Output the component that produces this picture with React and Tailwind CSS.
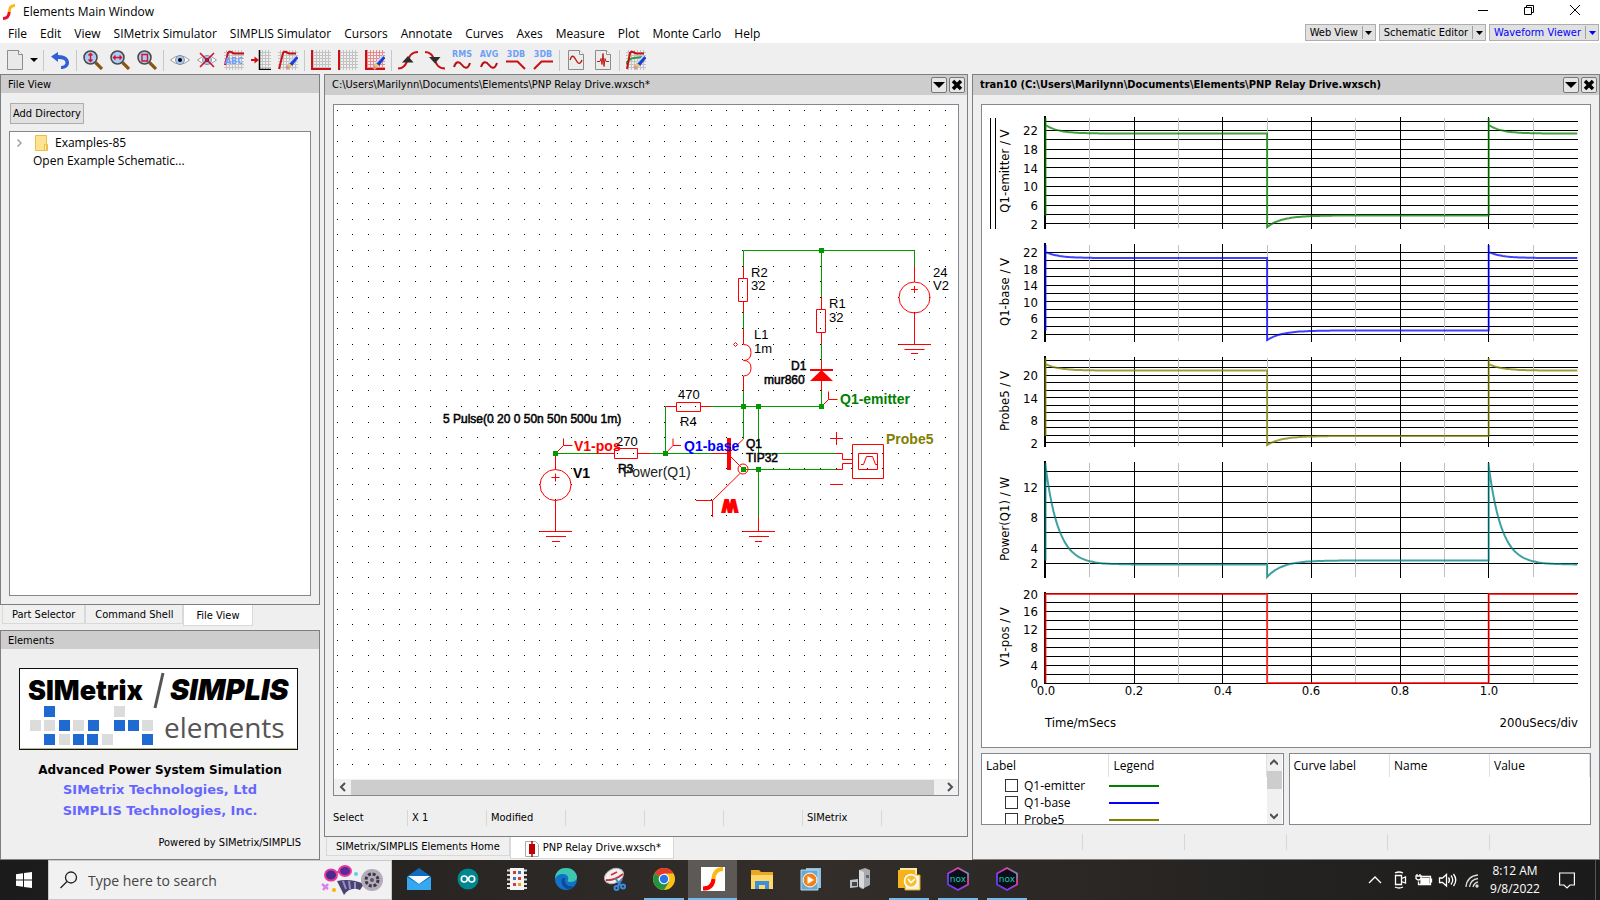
// Elements main window: file browser, schematic editor and waveform viewer
// side by side, sitting above the desktop taskbar.

import { clsx } from "clsx";

const ui = "font-['DejaVu_Sans_Condensed','DejaVu_Sans',sans-serif]";
const segoe = "font-['Open_Sans','Noto_Sans',sans-serif]";

const MENUS = [
  "File",
  "Edit",
  "View",
  "SIMetrix Simulator",
  "SIMPLIS Simulator",
  "Cursors",
  "Annotate",
  "Curves",
  "Axes",
  "Measure",
  "Plot",
  "Monte Carlo",
  "Help",
];

/* ---------------------------------------------------------------- header */

function ViewButton({ label, active }) {
  return (
    <div
      className={clsx(
        "flex h-[17px] items-center border border-[#adadad] bg-[#e1e1e1] text-[11px] leading-[15px]",
        active ? "text-[#0000ff]" : "text-black",
      )}
    >
      <button type="button" className="px-1 whitespace-nowrap">
        {label}
      </button>
      <button
        type="button"
        aria-label={`${label} options`}
        className="flex h-[13px] w-[13px] items-center justify-center border-l border-[#a0a0a0]"
      >
        <svg className="h-1 w-[7px]" viewBox="0 0 7 4" fill="currentColor">
          <path d="M0 0h7L3.500 4z" />
        </svg>
      </button>
    </div>
  );
}

function TitleBar() {
  return (
    <div className={clsx("flex h-6 items-center bg-white pl-[3px]", segoe)}>
      <svg className="h-4 w-3" viewBox="0 0 12 16" fill="none">
        <path d="M12 1.500C8 1.500 6.500 3 6.200 8" stroke="#fdb913" strokeWidth="3" />
        <path d="M6.200 8C6 12.500 4 14.500 0 14.500" stroke="#e8112d" strokeWidth="3" />
      </svg>
      <h1 className="ml-2 text-[12px] leading-4">Elements Main Window</h1>
      <div className="ml-auto flex items-center self-start pr-0.5">
        <button type="button" aria-label="Minimize" className="flex h-5 w-[46px] items-center justify-center">
          <span className="h-px w-2.5 bg-black" />
        </button>
        <button type="button" aria-label="Restore" className="flex h-5 w-[46px] items-center justify-center">
          <svg className="size-2.5" viewBox="0 0 10 10" fill="none" stroke="#000">
            <path d="M.5 2.500h7v7h-7zM2.500 2.500v-2h7v7h-2" />
          </svg>
        </button>
        <button type="button" aria-label="Close" className="flex h-5 w-[46px] items-center justify-center">
          <svg className="size-2.5" viewBox="0 0 10 10" fill="none" stroke="#000">
            <path d="M0 0l10 10M10 0L0 10" />
          </svg>
        </button>
      </div>
    </div>
  );
}

function MenuBar() {
  return (
    <div className="flex h-[19px] items-start bg-white">
      <nav className={clsx("flex gap-[13px] pl-2 text-[12px] leading-[19px]", segoe)}>
        {MENUS.map((m) => (
          <button key={m} type="button" className="whitespace-nowrap">
            {m}
          </button>
        ))}
      </nav>
      <div className={clsx("ml-auto flex gap-[3px] pr-px", ui)}>
        <ViewButton label="Web View" />
        <ViewButton label="Schematic Editor" />
        <ViewButton label="Waveform Viewer" active />
      </div>
    </div>
  );
}

/* --------------------------------------------------------------- toolbar */

function Grid({ x = 0, color = "#c2c2c2" }) {
  const n = [2, 5, 8, 11, 14, 17];
  return (
    <g stroke={color} strokeWidth="1">
      {n.map((p) => (
        <path key={p} d={`M${x} ${p + 0.5}H20`} />
      ))}
      {n.filter((p) => p >= x).map((p) => (
        <path key={p} d={`M${p + 0.5} 0V20`} />
      ))}
    </g>
  );
}

function Eraser() {
  return (
    <g>
      <path d="M10.500 13.500L17.500 5.500l3 2.500-6.500 8z" fill="#1c3fd0" />
      <path d="M11 13l7-7.500" stroke="#c8dcff" strokeWidth="1.600" />
      <path d="M9 15l2-2 3 2.500-2 2z" fill="#e9c95c" />
      <path d="M7 17.500L9 15l3 2.500L10 20z" fill="#d6949c" />
    </g>
  );
}

function Lens({ children }) {
  return (
    <>
      <path d="M12.500 12.500L19 19" stroke="#8a5416" strokeWidth="3.200" />
      <circle cx="7.500" cy="7.500" r="6.500" fill="#a9cdf7" stroke="#4a4a4a" strokeWidth="1.600" />
      <g stroke="#d4142a" strokeWidth="1.400" fill="none">{children}</g>
    </>
  );
}

function Eye() {
  return (
    <>
      <path d="M.5 10Q10 1.500 19.500 10Q10 18.500.5 10z" fill="#fff" stroke="#999" />
      <circle cx="10" cy="10" r="4.500" fill="#a8c6ee" stroke="#6c88ac" strokeWidth=".8" />
      <circle cx="10" cy="10" r="2" fill="#000" />
    </>
  );
}

function Wave({ label }) {
  return (
    <>
      <text x="10" y="7" textAnchor="middle" fontSize="8" fontWeight="700" fill="#6f9ff5" fontFamily="DejaVu Sans">
        {label}
      </text>
      {label === "3DB" ? null : (
        <path d="M2 17c2-6 5-6 8-2s6 4 8-2" fill="none" stroke="#b80f12" strokeWidth="2" />
      )}
    </>
  );
}

function Page({ children }) {
  return (
    <>
      <path d="M2.500.5h11l4 4v15h-15z" fill="#ececec" stroke="#8c8c8c" />
      <path d="M13.500.5v4h4" fill="#fff" stroke="#8c8c8c" />
      {children}
    </>
  );
}

const red = { fill: "none", stroke: "#cc0f14", strokeWidth: 2 };

const TOOLS = [
  null,
  ["Undo", <path key="a" d="M1 6.500L8 2v3c7 0 11 3 11 7.500 0 4-3 6.500-8 6.500v-3c3 0 4.500-1.500 4.500-3.500 0-2.500-3-3.500-7.500-3.500V12z" fill="#3060d8" />],
  null,
  ["Zoom Y", <Lens key="a"><path d="M7.500 3.500v8M5.500 5.500l2-2 2 2M5.500 9.500l2 2 2-2" /></Lens>],
  ["Zoom X", <Lens key="a"><path d="M3.500 7.500h8M5.500 5.500l-2 2 2 2M9.500 5.500l2 2-2 2" /></Lens>],
  ["Zoom box", <Lens key="a"><path d="M5 4.500h5.500V11H5z" /></Lens>],
  null,
  ["Show curves", <Eye key="a" />],
  ["Hide curves", <g key="a"><Eye /><path d="M3 3l14 14M17 3L3 17" stroke="#d4142a" strokeWidth="1.600" /></g>],
  ["Name curve", (
    <g key="a">
      <Grid />
      <path d="M1 15L4 3q1-2 3-1l3 1.500h10" {...red} />
      <text x="10" y="14" textAnchor="middle" fontSize="8" fontWeight="700" fill="#6f9ff5" fontFamily="DejaVu Sans">ABC</text>
    </g>
  )],
  ["Add to axis", (
    <g key="a">
      <Grid x={8} />
      <path d="M8.500 0v19.500H20" fill="none" stroke="#000" strokeWidth="1.500" />
      <path d="M0 10h5" {...red} />
      <path d="M3.500 6.500L8 10l-4.500 3.500z" fill="#cc0f14" />
    </g>
  )],
  ["Delete curve", <g key="a"><Grid /><path d="M1 19L5 3q1-2 3-1l3 1.500h7" {...red} /><Eraser /></g>],
  null,
  ["New axis", <g key="a"><Grid /><path d="M1 0v19h19" {...red} /></g>],
  ["New grid", <g key="a"><Grid /><path d="M1 0v20" {...red} /></g>],
  ["Delete axis", <g key="a"><Grid color="#e88a8a" /><path d="M1 0v19h19" {...red} /><Eraser /></g>],
  null,
  ["Rising edge", <g key="a"><path d="M0 18.500c12 0 7-16.500 20-16.500" {...red} /><path d="M4 12.500L10 6l5.500 6.500z" fill="#2e2e2e" /></g>],
  ["Falling edge", <g key="a"><path d="M0 2c12 0 7 16.500 20 16.500" {...red} /><path d="M4 7h11.500L10 13.500z" fill="#2e2e2e" /></g>],
  ["RMS", <Wave key="a" label="RMS" />],
  ["Average", <Wave key="a" label="AVG" />],
  ["Low pass", <g key="a"><Wave label="3DB" /><path d="M0 11.500h11.500L19 19" {...red} /></g>],
  ["High pass", <g key="a"><Wave label="3DB" /><path d="M20 11.500H8.500L1 19" {...red} /></g>],
  null,
  ["Sine", <Page key="a"><path d="M4 10c2-6 4-4 6 0s4 5 6 0" fill="none" stroke="#c01818" strokeWidth="1.400" /></Page>],
  ["Spectrum", <Page key="a"><path d="M4 11.500h3l1-3 1 6 1-11 1 13 1-8 1 3h3" fill="none" stroke="#c01818" /></Page>],
  null,
  ["Clear graph", (
    <g key="a">
      <Grid />
      <path d="M0 14c4-7 8-6 16-7" fill="none" stroke="#2aa04a" strokeWidth="2" />
      <path d="M1 19L4 3q1-2 3-1l3 1.500h8" {...red} />
      <Eraser />
    </g>
  )],
];

function Toolbar() {
  return (
    <div className="flex h-[31px] items-center bg-[#efefef] pt-[3px] pl-px">
      <button type="button" aria-label="New" className="flex w-[27px] justify-center">
        <svg className="h-5 w-4" viewBox="0 0 16 20">
          <path d="M.5.5h11l4 4v15H.5z" fill="#e9e9e9" stroke="#8c8c8c" />
          <path d="M11.500.5v4h4" fill="#fff" stroke="#8c8c8c" />
        </svg>
      </button>
      <button type="button" aria-label="New options" className="flex w-3 justify-center">
        <svg className="h-1 w-2" viewBox="0 0 8 4"><path d="M0 0h8L4 4z" /></svg>
      </button>
      {TOOLS.map((t, i) =>
        t ? (
          <button key={i} type="button" aria-label={t[0]} className="flex w-[27px] justify-center">
            <svg className="size-5" viewBox="0 0 20 20">{t[1]}</svg>
          </button>
        ) : (
          <span key={i} className="flex h-[21px] w-1.5 justify-center">
            <span className="w-px bg-[#c8c8c8]" />
          </span>
        ),
      )}
    </div>
  );
}

/* ---------------------------------------------------------------- panels */

function PanelTitle({ children, bold, controls }) {
  return (
    <div
      className={clsx(
        "flex shrink-0 items-center bg-[#cdcdcd] px-[7px] text-[11px]",
        controls ? "h-5 pr-0.5" : "h-[18px] pt-0.5",
      )}
    >
      <h2 className={clsx("truncate leading-4", bold && "font-bold")}>{children}</h2>
      {controls && (
        <div className="ml-auto flex gap-0.5">
          <button type="button" aria-label="Panel menu" className="flex size-4 items-center justify-center rounded-xs border border-[#777] bg-[#e6e6e6]">
            <svg className="h-1.5 w-3" viewBox="0 0 12 6"><path d="M0 0h12L6 6z" /></svg>
          </button>
          <button type="button" aria-label="Close panel" className="flex size-4 items-center justify-center rounded-xs border border-[#777] bg-[#e6e6e6]">
            <svg className="size-3" viewBox="0 0 12 12"><path d="M2 2l8 8M10 2l-8 8" stroke="#000" strokeWidth="3.500" /></svg>
          </button>
        </div>
      )}
    </div>
  );
}

function FileView() {
  return (
    <section className="flex min-h-0 flex-1 flex-col border border-[#7f7f7f]">
      <PanelTitle>File View</PanelTitle>
      <div className="flex min-h-0 flex-1 flex-col px-2 pt-2.5 pb-2">
        <button type="button" className="ml-px h-[21px] self-start border border-[#adadad] bg-[#e1e1e1] px-0.5 text-[11px] leading-[19px]">
          Add Directory
        </button>
        <ul className={clsx("mt-[7px] flex-1 border border-[#828790] bg-white pt-0.5 text-[12px] leading-[18px]", segoe)}>
          <li className="flex items-center pl-[7px]">
            <svg className="h-2 w-[5px]" viewBox="0 0 5 8" fill="none" stroke="#a0a0a0" strokeWidth="1.500">
              <path d="M.5.5L4 4 .5 7.500" />
            </svg>
            <svg className="ml-[13px] h-4 w-[13px]" viewBox="0 0 13 16">
              <path d="M.5.5h11v9h1v6H.5z" fill="#ffe393" stroke="#e8c04a" />
              <path d="M9.500 9.500h2v6h-2z" fill="#fff0b8" stroke="#e8c04a" />
            </svg>
            <span className="ml-[7px]">Examples-85</span>
          </li>
          <li className="pl-[23px]">Open Example Schematic...</li>
        </ul>
      </div>
    </section>
  );
}

const LOGO_SQUARES = [
  [45, 706, 1], [115, 706, 0],
  [31, 720, 0], [45, 720, 0], [60, 720, 1], [74, 720, 0], [89, 720, 1], [115, 720, 1], [129, 720, 1], [143, 720, 0],
  [45, 734, 1], [60, 734, 0], [74, 734, 1], [88, 734, 1], [103, 734, 0], [143, 734, 1],
];

function ElementsPanel() {
  return (
    <section className="mt-1 flex h-[230px] shrink-0 flex-col border border-[#7f7f7f]">
      <PanelTitle>Elements</PanelTitle>
      <div className="flex flex-1 flex-col items-center pt-[19px] font-['DejaVu_Sans',sans-serif] text-[12px] font-bold">
        <svg className="mr-0.5 h-[82px] w-[280px]" viewBox="20 668 280 82">
          <rect x="20.500" y="668.500" width="278" height="81" fill="#fff" stroke="#111" />
          <path d="M21.500 748.500h276" stroke="#b9b98c" />
          {LOGO_SQUARES.map(([x, y, on]) => (
            <rect key={`${x}-${y}`} x={x} y={y} width="11" height="11" fill={on ? "#1f6ad0" : "#dcdcdc"} />
          ))}
          <text x="29" y="700" fontFamily="Inter, sans-serif" fontWeight="900" fontSize="27">SIMetrix</text>
          <path d="M164 673l-8 35" stroke="#555" strokeWidth="3" />
          <text x="171" y="700" fontFamily="Inter, sans-serif" fontWeight="900" fontStyle="italic" fontSize="29">SIMPLIS</text>
          <text x="165" y="738" fontFamily="'Open Sans', sans-serif" fontSize="28" fontWeight="400" fill="#555">elements</text>
        </svg>
        <p className="mt-3 leading-4">Advanced Power System Simulation</p>
        <a href="#simetrix" className="mt-1 leading-4 text-[13px] text-[#6666ff]">SIMetrix Technologies, Ltd</a>
        <a href="#simplis" className="mt-[5px] leading-4 text-[13px] text-[#6666ff]">SIMPLIS Technologies, Inc.</a>
        <p className={clsx("mt-4 mr-[18px] self-end text-[11px] leading-4 font-normal", ui)}>
          Powered by SIMetrix/SIMPLIS
        </p>
      </div>
    </section>
  );
}

function Tab({ children, active }) {
  return (
    <button
      type="button"
      role="tab"
      aria-selected={!!active}
      className={clsx(
        "flex items-center border border-t-0 border-[#d9d9d9] pt-0.5 whitespace-nowrap",
        active ? "h-full bg-white px-3" : "h-[19px] bg-[#f0f0f0] px-[9px]",
      )}
    >
      {children}
    </button>
  );
}

/* ------------------------------------------------------------- schematic */

const COLS = Array.from({ length: 40 }, (_, i) => Math.floor(337.2 + i * 15.59));
const ROWS = Array.from({ length: 43 }, (_, i) => Math.floor(110.2 + i * 15.59));
const DOTS = ROWS.map((y) => COLS.map((x) => `M${x} ${y}h1v1h-1z`).join("")).join("");

const WIRES = [
  "M743.5 266.500V250.500H914.500V266.500M821.500 250.500V297.500M743.500 313V329M743.500 391V439",
  "M821.500 344V360M821.500 391V406.500H711M758.500 406.500V453.500H836M743.500 469.500H836M758.500 469.500V517",
  "M665.500 406.500V453.500H712M555.500 453.500H598M650 453.500H665.500",
].join("");

const PARTS = [
  // R2, L1
  "M743.500 266V278.500M738.500 278.500h9v23h-9zM743.500 301.500V313M743.500 329V344.500",
  "M743.500 344.500q7.500 0 7.500 8t-7.500 8q7.500 0 7.500 7.500t-7.500 8V391",
  "M733.500 344.500l2-2 2 2-2 2z",
  // R1, D1
  "M821.500 297V309.500M816.500 309.500h9v23h-9zM821.500 332.500V344M821.500 360V391",
  // R4, R3
  "M665.500 406.500H676.500M676.500 402.500h24v9h-24zM700.500 406.500H711",
  "M598 453.500H614.500M614.500 448.500h23v10h-23zM637.500 453.500H650",
  // V2, V1
  "M914.500 266V282M911 289.500h7M914.500 286v7M914.500 313V344.500M899 344.500h32M904.500 349.500h20M911 353.500h7",
  "M555.500 453.500V469.500M551.500 477.500h8M555.500 473.500v8M555.500 500.500V531.500M540 531.500h32M546 536.500h20M552 541.500h8",
  // ground under Q1
  "M758.500 517V531.500M743 531.500h32M749 536.500h20M755 541.500h7",
  // Q1
  "M712 453.500H727M743.500 439L731 451M731 457L743.500 469.500",
  // probes
  "M555.500 453.500l8-8v-7M563.500 445.500h9M665.500 453.500l7.500-8v-7M673 445.500h8M821.500 406.500l7-7v-8M828.500 399.500h9",
  "M740 473.500L712.500 500.500H696M712.500 500.500V517",
  // differential probe
  "M830 438.500h13M836.500 432v13M830 484.500h13M836 453.500h6.500v6h10M836 469.500h6.500v-6h10",
  "M852.500 444.500h31v34h-31zM858.500 453.500h19v16h-19zM861 464.500h2.500l3-8h6l3 8h2",
].join("");

const NODES = [[821, 250], [743, 406], [758, 406], [821, 406], [665, 453], [743, 469], [758, 469], [555, 453]];

const LABELS = [
  ["R2", 751, 277], ["32", 751, 290], ["R1", 829, 308], ["32", 829, 322],
  ["L1", 754, 339], ["1m", 754, 353], ["24", 933, 277], ["V2", 933, 290],
  ["470", 678, 399], ["R4", 680, 426], ["270", 616, 446],
];

const HEAVY = [
  ["D1", 791, 370], ["mur860", 764, 384], ["Q1", 746, 448], ["TIP32", 746, 462], ["R3", 618, 473],
  ["5 Pulse(0 20 0 50n 50n 500u 1m)", 443, 423],
];

const PROBES = [
  ["V1-pos", 574, 451, "#ff0000"],
  ["V1", 573, 478, "#000000"],
  ["Q1-base", 684, 451, "#0000ff"],
  ["Q1-emitter", 840, 404, "#008000"],
  ["Probe5", 886, 444, "#808000"],
];

function Schematic() {
  return (
    <svg
      className="block h-[674px] w-[624px] shrink-0"
      viewBox="334 105 624 674"
      fontFamily="'Liberation Sans', Arial, sans-serif"
      role="img"
      aria-label="PNP Relay Drive schematic"
    >
      <path d={DOTS} fill="#000" shapeRendering="crispEdges" />
      <path d={WIRES} fill="none" stroke="#009900" />
      <path d={PARTS} fill="none" stroke="#ff0000" />
      <g fill="none" stroke="#ff0000">
        <circle cx="914.500" cy="297.500" r="15.500" />
        <circle cx="555.500" cy="485" r="15.500" />
        <circle cx="743" cy="469" r="5" />
      </g>
      <path d="M727 438h4v32h-4zM810 369h23v2h-23zM810 381L821.500 370 833 381z" fill="#ff0000" />
      {NODES.map(([x, y]) => (
        <rect key={`${x}-${y}`} x={x - 2} y={y - 2} width="5" height="5" fill="#009900" />
      ))}
      <g fontSize="13">
        {LABELS.map(([t, x, y]) => (
          <text key={t + x + y} x={x} y={y}>{t}</text>
        ))}
      </g>
      <g fontSize="12" stroke="#000" strokeWidth=".5">
        {HEAVY.map(([t, x, y]) => (
          <text key={t} x={x} y={y}>{t}</text>
        ))}
      </g>
      <text x="623" y="477" fontSize="14" fill="#222">Power(Q1)</text>
      <g fontSize="14" fontWeight="700">
        {PROBES.map(([t, x, y, c]) => (
          <text key={t} x={x} y={y} fill={c}>{t}</text>
        ))}
      </g>
      <text
        textAnchor="middle"
        transform="translate(730 500) rotate(180)"
        fontSize="16"
        fontWeight="700"
        fill="#ff0000"
        stroke="#ff0000"
        strokeWidth="2"
      >
        W
      </text>
    </svg>
  );
}

function Chevron({ dir }) {
  const d = {
    left: "M6 1L2 5l4 4",
    right: "M2 1l4 4-4 4",
    up: "M0 6.500l4-4 4 4",
    down: "M0 3l4 4 4-4",
  }[dir];
  return (
    <svg className="h-2.5 w-2" viewBox="0 0 8 10" fill="none" stroke="#505050" strokeWidth="2">
      <path d={d} />
    </svg>
  );
}

function SchematicPanel() {
  return (
    <div className="flex min-w-0 flex-[645] flex-col pb-px">
      <section className="flex min-h-0 flex-1 flex-col border border-[#7f7f7f]">
        <PanelTitle controls>C:\Users\Marilynn\Documents\Elements\PNP Relay Drive.wxsch*</PanelTitle>
        <div className="mx-2 mt-[9px] flex min-h-0 flex-1 flex-col border border-[#828790] bg-white">
          <div className="min-h-0 flex-1 overflow-hidden">
            <Schematic />
          </div>
          <div className="flex h-4 shrink-0 items-center bg-[#f0f0f0]">
            <button type="button" aria-label="Scroll left" className="flex w-[17px] justify-center"><Chevron dir="left" /></button>
            <div className="h-[15px] flex-1 bg-[#cdcdcd]" />
            <button type="button" aria-label="Scroll right" className="flex w-6 justify-center pl-2"><Chevron dir="right" /></button>
          </div>
        </div>
        <div className="mx-2 flex h-10 shrink-0 items-center pt-1 text-[11px] leading-4 *:h-4 *:w-[79px] *:border-r *:border-[#d7d7d7] *:pl-1">
          <span className="-ml-1">Select</span>
          <span>X 1</span>
          <span>Modified</span>
          <span />
          <span />
          <span />
          <span>SIMetrix</span>
        </div>
      </section>
      <div role="tablist" className="flex h-[22px] items-start pl-0.5 text-[11px]">
        <Tab>SIMetrix/SIMPLIS Elements Home</Tab>
        <Tab active>
          <svg className="mr-1 ml-0.5 h-4 w-3.5" viewBox="0 0 14 16">
            <path d="M.5.5h10l3 3v12H.5z" fill="#fff" stroke="#aaa" />
            <path d="M7 0v16" stroke="#c00000" strokeWidth="1.500" />
            <path d="M4 3h6v10H4z" fill="#c00000" />
          </svg>
          PNP Relay Drive.wxsch*
        </Tab>
      </div>
    </div>
  );
}

/* -------------------------------------------------------------- waveform */

// x position of a time given in milliseconds
const tx = (t) => 1045.5 + t * 443.2;

// exponential settle from y0 to y1, starting at time t0 and running to t1
function settle(t0, t1, y0, y1, tau) {
  const a = tx(t0);
  const b = tx(t1);
  let d = "";
  for (let x = a; x <= b; x += 2) {
    d += `L${x.toFixed(1)} ${(y1 + (y0 - y1) * Math.exp(-(x - a) / tau)).toFixed(1)}`;
  }
  return `${d}L${b.toFixed(1)} ${y1}`;
}

const AXES = [
  {
    name: "Q1-emitter / V", color: "#008000", top: 116, bottom: 228, mid: 171,
    y: (v) => 233 - 4.66 * v, lines: [2, 4, 6, 8, 10, 12, 14, 16, 18, 20, 22, 24], labels: [2, 6, 10, 14, 18, 22],
    peak: 118, start: 125, high: 133.500, dip: 227, low: 215.500,
  },
  {
    name: "Q1-base / V", color: "#0000ff", top: 243, bottom: 341, mid: 292,
    y: (v) => 342.5 - 4.1 * v, lines: [2, 4, 6, 8, 10, 12, 14, 16, 18, 20, 22], labels: [2, 6, 10, 14, 18, 22],
    peak: 245, start: 252, high: 258, dip: 340, low: 330.500,
  },
  {
    name: "Probe5 / V", color: "#808000", top: 356, bottom: 446, mid: 401,
    y: (v) => 450.2 - 3.745 * v, lines: [2, 4, 6, 8, 10, 12, 14, 16, 18, 20, 22, 24], labels: [2, 8, 14, 20],
    peak: 358, start: 364, high: 370.500, dip: 445, low: 436,
  },
  {
    name: "Power(Q1) / W", color: "#008080", top: 461, bottom: 577, mid: 519,
    y: (v) => 578.7 - 7.67 * v, lines: [2, 4, 6, 8, 10, 12, 14], labels: [2, 4, 8, 12],
    peak: 463, start: 466, high: 564.500, dip: 577, low: 560.500,
  },
  {
    name: "V1-pos / V", color: "#ff0000", top: 592, bottom: 683, mid: 637,
    y: (v) => 683 - 4.47 * v, lines: [0, 2, 4, 6, 8, 10, 12, 14, 16, 18, 20], labels: [0, 4, 8, 12, 16, 20],
    peak: 594, start: 594, high: 594, dip: 683, low: 683,
  },
];

function curve(a) {
  return (
    `M${tx(0)} ${a.low}V${a.peak}V${a.start}${settle(0, 0.5, a.start, a.high, 13)}` +
    `V${a.dip}${settle(0.5, 1, a.dip, a.low, 15)}V${a.peak}V${a.start}${settle(1, 1.2, a.start, a.high, 13)}`
  );
}

function Axis({ axis }) {
  return (
    <g>
      <g shapeRendering="crispEdges">
        {axis.lines.map((v) => (
          <path key={v} d={`M1045 ${Math.floor(axis.y(v)) + 0.5}H1578`} stroke="#000" />
        ))}
        {[0.1, 0.3, 0.5, 0.7, 0.9, 1.1].map((t) => (
          <path key={t} d={`M${Math.floor(tx(t)) + 0.5} ${axis.top + 2}V${axis.bottom}`} stroke="#c0c0c0" />
        ))}
        {[0.2, 0.4, 0.6, 0.8, 1].map((t) => (
          <path key={t} d={`M${Math.floor(tx(t)) + 0.5} ${axis.top + 1}V${axis.bottom + 1}`} stroke="#000" />
        ))}
        <path d={`M1045 ${axis.top}V${axis.bottom + 1}`} stroke="#000" strokeWidth="2" />
      </g>
      <path d={curve(axis)} fill="none" stroke={axis.color} strokeWidth="2" strokeOpacity=".75" />
      {axis.labels.map((v) => (
        <text key={v} x="1038" y={Math.round(axis.y(v)) + 5} textAnchor="end">{v}</text>
      ))}
      <text textAnchor="middle" transform={`translate(1009 ${axis.mid}) rotate(-90)`}>{axis.name}</text>
    </g>
  );
}

function Plot() {
  return (
    <svg
      className="block h-[642px] w-[608px] shrink-0"
      viewBox="982 105 608 642"
      fontFamily="'DejaVu Sans Condensed', 'DejaVu Sans', sans-serif"
      fontSize="13"
      role="img"
      aria-label="Transient analysis waveforms"
    >
      <path d="M990.500 118V229M995.500 118V229" stroke="#000" />
      {AXES.map((a) => (
        <Axis key={a.name} axis={a} />
      ))}
      {["0.0", "0.2", "0.4", "0.6", "0.8", "1.0"].map((t) => (
        <text key={t} x={Math.round(tx(Number(t)))} y="695" textAnchor="middle">{t}</text>
      ))}
      <text x="1045" y="727">Time/mSecs</text>
      <text x="1578" y="727" textAnchor="end">200uSecs/div</text>
    </svg>
  );
}

const LEGEND = [
  { id: "q1-emitter", name: "Q1-emitter", line: "bg-[#008000]" },
  { id: "q1-base", name: "Q1-base", line: "bg-[#0000ff]" },
  { id: "probe5", name: "Probe5", line: "bg-[#808000]" },
];

function WaveformPanel() {
  return (
    <section className="flex min-w-0 flex-[627] flex-col border border-[#7f7f7f]">
      <PanelTitle bold controls>tran10 (C:\Users\Marilynn\Documents\Elements\PNP Relay Drive.wxsch)</PanelTitle>
      <div className="mx-2 mt-[9px] min-h-0 flex-1 overflow-hidden border border-[#828790] bg-white">
        <Plot />
      </div>
      <div className={clsx("mx-2 mt-[5px] flex h-[72px] shrink-0 gap-[5px] text-[12px]", segoe)}>
        <div className="flex flex-1 overflow-hidden border border-[#828790] bg-white">
          <div className="flex-1 overflow-hidden">
            <table className="w-full table-fixed text-left leading-[17px]">
              <thead>
                <tr className="h-[23px]">
                  <th className="w-[127px] border-r border-[#e0e0e0] pl-1 font-normal">Label</th>
                  <th className="border-r border-[#e0e0e0] pl-1 font-normal">Legend</th>
                </tr>
              </thead>
              <tbody>
                {LEGEND.map((row) => (
                  <tr key={row.id} className="h-[17px]">
                    <td className="pl-[23px]">
                      <label className="flex items-center gap-1.5">
                        <input type="checkbox" id={row.id} className="size-[13px] appearance-none border border-[#333] bg-white" />
                        {row.name}
                      </label>
                    </td>
                    <td><span className={clsx("block h-0.5 w-[50px]", row.line)} /></td>
                  </tr>
                ))}
              </tbody>
            </table>
          </div>
          <div className="mr-px flex w-[15px] flex-col items-center bg-[#f0f0f0]">
            <button type="button" aria-label="Scroll up" className="flex h-[17px] items-center"><Chevron dir="up" /></button>
            <div className="h-[18px] w-full bg-[#cdcdcd]" />
            <button type="button" aria-label="Scroll down" className="mt-auto flex h-[17px] items-center"><Chevron dir="down" /></button>
          </div>
        </div>
        <div className="flex-1 border border-[#828790] bg-white">
          <table className="w-full table-fixed text-left">
            <thead>
              <tr className="h-[23px]">
                <th className="border-r border-[#e0e0e0] pl-1 font-normal">Curve label</th>
                <th className="border-r border-[#e0e0e0] pl-1 font-normal">Name</th>
                <th className="border-r border-[#e0e0e0] pl-1 font-normal">Value</th>
              </tr>
            </thead>
          </table>
        </div>
      </div>
      <div className="mx-2 flex h-[34px] shrink-0 items-center *:h-4 *:flex-1 *:border-r *:border-[#d7d7d7]">
        <span /><span /><span /><span /><span />
        <span className="border-r-0!" />
      </div>
    </section>
  );
}

/* --------------------------------------------------------------- taskbar */

function Nox() {
  return (
    <>
      <defs>
        <linearGradient id="nox" x1="0" x2="1" y1="1" y2="0">
          <stop offset="0" stopColor="#5a3cf0" />
          <stop offset=".35" stopColor="#8a3cf0" />
          <stop offset=".7" stopColor="#e83ca0" />
          <stop offset="1" stopColor="#20c8d0" />
        </linearGradient>
      </defs>
      <path d="M12 1l10 5.500v11L12 23 2 17.500v-11z" fill="#0c1016" stroke="url(#nox)" strokeWidth="1.800" />
      <text x="12" y="15" textAnchor="middle" fontSize="9" fill="#18c8b8" fontFamily="DejaVu Sans">nox</text>
    </>
  );
}

const APPS = [
  { name: "Mail", icon: <><path d="M0 9.500L12 1l12 8.500V23H0z" fill="#0f6cbd" /><path d="M1 9h22l-11 8z" fill="#f4faff" /><path d="M0 10l12 7.500L24 10v13H0z" fill="#35a8f0" /></> },
  { name: "Arduino", icon: <><circle cx="12" cy="12" r="10.500" fill="#00878f" /><g fill="none" stroke="#fff" strokeWidth="1.600"><circle cx="8.300" cy="12" r="3" /><circle cx="15.700" cy="12" r="3" /></g></> },
  { name: "Chip tool", icon: <><path d="M2 3.500h20M2 8h20M2 12.500h20M2 17h20M2 21h20" stroke="#ddd" strokeWidth="2" /><path d="M5 1h14v22H5z" fill="#f5f5f5" /><g fill="#d04030"><path d="M8 4h3v3H8zM13 10h3v3h-3zM8 16h3v3H8z" /></g><g fill="#4a70c0"><path d="M13 4h3v3h-3zM8 10h3v3H8z" /></g><path d="M13 16h3v3h-3z" fill="#e0a020" /></> },
  { name: "Edge", icon: <><circle cx="12" cy="12" r="11" fill="#1272c8" /><path d="M1 12C1 4 7 1 12 1c7 0 11 5 11 9 0 4-4 5-7 5-2 0-3-1-2-2 1-3-1-6-5-6-4 0-7 2-8 5z" fill="#3cc8b0" /><path d="M9 11c-3 3-1 9 4 11 3 .5 6-1 8-3-6 2-12-2-10-8z" fill="#0c4a98" /></> },
  { name: "Snip", icon: <><ellipse cx="11" cy="9" rx="10" ry="7" transform="rotate(-25 11 9)" fill="#f0f0f0" stroke="#b8b8b8" /><path d="M3 13q8 1 17-6M8 8l6-3" fill="none" stroke="#d03030" strokeWidth="1.800" /><g fill="none" stroke="#3b8ad8" strokeWidth="2"><path d="M12 11l6 8M19 12l-5 8" /><circle cx="20" cy="19.500" r="2" /><circle cx="13.500" cy="21" r="2" /></g></> },
  { name: "Chrome", open: true, icon: <><circle cx="12" cy="12" r="11" fill="#fbc116" /><path d="M12 12L2.500 6.500A11 11 0 0 1 21.500 6.500H12z" fill="#e33b2e" /><path d="M12 12L2.500 6.500A11 11 0 0 0 12 23l5-8z" fill="#229342" /><circle cx="12" cy="12" r="5.300" fill="#fff" /><circle cx="12" cy="12" r="4.200" fill="#2a74e8" /></> },
  { name: "Elements", active: true, icon: <><path d="M0 0h24v24H0z" fill="#fff" /><path d="M22 2c-6 0-9 3-9.500 10" fill="none" stroke="#fdb913" strokeWidth="4" /><path d="M12.500 12C12 18 9 21.500 2 21.500" fill="none" stroke="#ff0000" strokeWidth="4" /></> },
  { name: "File Explorer", icon: <><path d="M1 3h8l2 2h12v17H1z" fill="#e8a828" /><path d="M1 8h22v14H1z" fill="#ffd868" /><path d="M5 14h14v8h-4v-4H9v4H5z" fill="#3a90dc" /></> },
  { name: "Media player", icon: <><path d="M7 1h15v20H7z" fill="#8cc0e4" /><path d="M2 3h17v20H2z" fill="#6aa8d4" stroke="#b8dcf4" /><circle cx="11" cy="13" r="7" fill="#f08018" stroke="#fff" /><path d="M8.500 9l6.500 4-6.500 4z" fill="#fff" /></> },
  { name: "Devices", icon: <><path d="M11 3l6-2 5 2v15l-8 4-3-2z" fill="#a8acb0" /><path d="M11 3l5 2v17l-5-3z" fill="#d8dadc" /><path d="M18 8h3v3h-3z" fill="#666" /><path d="M2 13l8-1v8l-8 1z" fill="#c0c4c8" /><path d="M4 15h5v4H4z" fill="#44484c" /></> },
  { name: "Outlook", open: true, icon: <><path d="M3 1h17v8H3z" fill="#ffe9a8" /><path d="M1 3h17v18H1z" fill="#f6b31c" /><path d="M8 8h15v15H8z" fill="#fff3cf" stroke="#e8a010" /><circle cx="14" cy="14" r="6.500" fill="#f8c030" stroke="#fff" strokeWidth="1.500" /><path d="M11 12l3 3.500 4-3.500" fill="none" stroke="#fff" strokeWidth="1.600" /></> },
  { name: "Nox", open: true, icon: <Nox /> },
  { name: "Nox Multi", open: true, icon: <Nox /> },
];

function SearchArt() {
  return (
    <svg className="h-[30px] w-[62px]" viewBox="321 865 62 30">
      <path d="M337 881q14-3 27 3l-4 6q-10-4-16 5z" fill="#4a4272" />
      <path d="M343 881l3 8M349 881l1 8M355 882v7" stroke="#9a90c8" strokeWidth="2" />
      <circle cx="372" cy="880" r="11" fill="#b4acba" />
      <circle cx="372" cy="880" r="6" fill="none" stroke="#3c3848" strokeWidth="3" strokeDasharray="3 1.700" />
      <circle cx="372" cy="880" r="2" fill="#5c5668" />
      <ellipse cx="331" cy="875" rx="6" ry="5.500" fill="#4a2a90" stroke="#e8389c" strokeWidth="2" />
      <ellipse cx="345" cy="871" rx="6" ry="5" fill="#5a2a98" stroke="#e8389c" strokeWidth="2" />
      <path d="M336 873l4-2" stroke="#e8389c" strokeWidth="2" />
      <circle cx="356" cy="874" r="2" fill="#58d0e8" />
      <circle cx="334" cy="890" r="2" fill="#ffb000" />
      <path d="M322 884l6 5M328 884l-5 6" stroke="#d880f0" strokeWidth="2.500" />
    </svg>
  );
}

function Taskbar() {
  return (
    <footer className={clsx("flex h-10 shrink-0 bg-linear-to-r from-[#1b1b1b] via-[#332e2a] to-[#1b1b1b] text-white", segoe)}>
      <button type="button" aria-label="Start" className="flex w-12 items-center justify-center">
        <svg className="size-4" viewBox="0 0 16 16" fill="#fff">
          <path d="M0 2.200l7-1v6.300H0zM8 1l8-1v7.500H8zM0 8.500h7v6.300l-7-1zM8 8.500h8V16l-8-1z" />
        </svg>
      </button>
      <label className="flex w-[344px] items-center border border-[#c8c8c8] bg-[#f1f1f1] pr-2 pl-[11px]">
        <svg className="size-[18px]" viewBox="0 0 18 18" fill="none" stroke="#222" strokeWidth="1.300">
          <circle cx="11" cy="6.500" r="5.500" />
          <path d="M7 10.500L.5 17" />
        </svg>
        <input
          type="search"
          aria-label="Search"
          placeholder="Type here to search"
          className="ml-2.5 w-0 flex-1 bg-transparent text-[14px] placeholder:text-[#444] focus:outline-none"
        />
        <SearchArt />
      </label>
      <nav className="ml-0.5 flex">
        {APPS.map((a) => (
          <button
            key={a.name}
            type="button"
            aria-label={a.name}
            className={clsx("flex w-[49px] flex-col items-center", a.active && "bg-[#5c5956]")}
          >
            <svg className="my-auto size-6" viewBox="0 0 24 24">{a.icon}</svg>
            <span className={clsx("h-0.5", a.active && "w-full bg-[#76b9ed]", a.open && "w-10 bg-[#76b9ed]")} />
          </button>
        ))}
      </nav>
      <div className="ml-auto flex items-center">
        <svg className="h-5 w-[120px]" viewBox="1366 870 120 20" fill="none" stroke="#fff" strokeWidth="1.300">
          <path d="M1369 883l6-6 6 6" />
          <path d="M1395.500 875.500h6v9h-6zM1401.500 878.500l4-1.500v6l-4-1.500M1395 873q4-2 8 0M1395 887q4 2 8 0" />
          <path d="M1420.500 876.500h10v8h-12v-3M1431.500 878.500v4M1416 876h5v2.500q-2.500 3-5 0zM1417 874v2M1420 874v2" />
          <path d="M1421 878.500h8v5h-8z" fill="#fff" />
          <path d="M1439.500 878h3l4-3.500v11.500l-4-3.500h-3zM1448.500 877.500q2 2.500 0 5.500M1451 875.500q3.500 4.500 0 9M1453.500 874q4.500 6 0 12" />
          <g stroke="#ddd"><path d="M1466 887q1-11 12-12M1469.500 887q1-7.500 8.500-8.500M1473 887q1-4 5-5" /><circle cx="1477" cy="886" r="1" fill="#fff" /></g>
        </svg>
        <time className="w-[58px] text-center text-[12px] leading-[18px]">
          8:12 AM
          <br />
          9/8/2022
        </time>
        <button type="button" aria-label="Notifications" className="ml-3.5 flex w-[37px] justify-start pl-px">
          <svg className="h-[17px] w-4" viewBox="0 0 16 17" fill="none" stroke="#fff" strokeWidth="1.200">
            <path d="M.6 1h14.800v12H11l-3 3-3-3H.6z" />
          </svg>
        </button>
        <span className="mr-1 h-10 w-px bg-[#555]" />
      </div>
    </footer>
  );
}

/* ------------------------------------------------------------------- app */

export default function App() {
  return (
    <div className={clsx("flex min-h-screen flex-col bg-[#efefef] text-black", ui)}>
      <header>
        <TitleBar />
        <MenuBar />
        <Toolbar />
      </header>
      <main className="flex flex-1 gap-1">
        <aside className="flex w-1/5 shrink-0 flex-col">
          <FileView />
          <div role="tablist" className="flex h-[21px] shrink-0 items-start pl-0.5 text-[11px]">
            <Tab>Part Selector</Tab>
            <Tab>Command Shell</Tab>
            <Tab active>File View</Tab>
          </div>
          <ElementsPanel />
        </aside>
        <SchematicPanel />
        <WaveformPanel />
      </main>
      <Taskbar />
    </div>
  );
}
